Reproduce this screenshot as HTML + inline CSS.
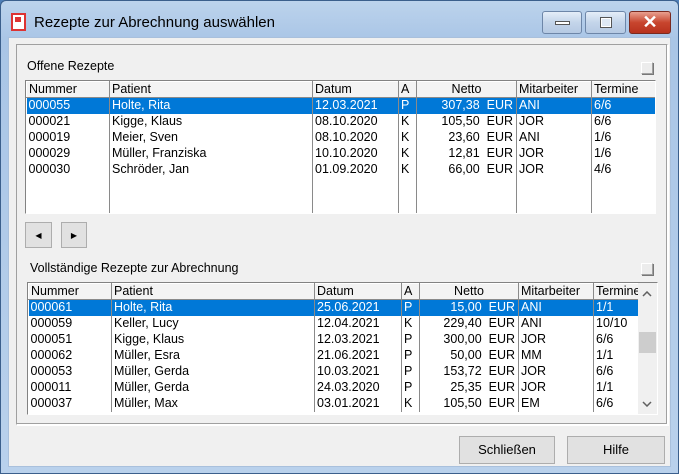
<!DOCTYPE html>
<html><head><meta charset="utf-8"><style>
*{margin:0;padding:0;box-sizing:border-box}
body{width:679px;height:474px;overflow:hidden;background:#4f7fb8;font-family:"Liberation Sans",sans-serif;font-size:12.5px;color:#000;position:relative}
.abs{position:absolute}
.frame{left:0;top:0;width:679px;height:474px;background:linear-gradient(#bcd3ec,#a9c5e6 40px,#b9d1ec);border:1px solid #3b5f8c;border-radius:6px 6px 0 0}
.client{left:8px;top:37px;width:663px;height:430px;background:#f0f0f0;border:1px solid #a9c0dc}
.title{left:34px;top:14px;font-size:15px;color:#000}
.tb{top:11px;height:23px;border:1px solid #6d86a8;border-radius:3px;background:linear-gradient(#e4edf8,#c4d5ea 50%,#b5c9e3)}
.panel{left:16px;top:44px;width:652px;height:381px;border:1px solid #a0a0a0;border-right-color:#fff;border-bottom-color:#fff;box-shadow:inset -1px -1px 0 #a0a0a0,1px 1px 0 #fff}
.list{background:#fff;border:1px solid #828282;border-right-color:#fff;border-bottom-color:#fff;overflow:hidden}
table{border-collapse:collapse;table-layout:fixed}
td,th{height:16px;padding:0 2px;white-space:nowrap;overflow:hidden;font-weight:normal;text-align:left;line-height:15px;border-right:1px solid #8a8a8a}
th{background:#f3f3f3;border:1px solid #fff;border-right:1px solid #8a8a8a;border-bottom:1px solid #8a8a8a}
tr.sel td{background:#0078d7;color:#fff}
.r{text-align:right;padding-right:3px}
.btn{background:#e1e1e1;border:1px solid #adadad;text-align:center;line-height:25px;font-size:13px}
.sq{width:12px;height:12px;border:1px solid #fff;border-right-color:#a0a0a0;border-bottom-color:#a0a0a0;background:#ececec;box-shadow:1px 1px 0 #777}
</style></head><body>
<div class="abs frame"></div>
<div class="abs" style="left:11px;top:13px;width:15px;height:18px;background:#fff;border:2px solid #d33;"><div style="position:absolute;left:2px;top:2px;width:6px;height:5px;background:#d33"></div></div>
<div class="abs title">Rezepte zur Abrechnung auswählen</div>
<div class="abs tb" style="left:542px;width:40px"><div style="position:absolute;left:12px;top:9px;width:15px;height:4px;background:#fff;border:1px solid #555"></div></div>
<div class="abs tb" style="left:585px;width:41px"><div style="position:absolute;left:14px;top:5px;width:12px;height:11px;border:1px solid #555;background:#dfe9f5;box-shadow:inset 0 0 0 1px #fff"></div></div>
<div class="abs tb" style="left:629px;width:42px;background:linear-gradient(#e8a090,#c8452e 50%,#b8321e);border-color:#7a2a20;color:#fff;font-weight:bold;font-size:18px;text-align:center;line-height:21px">✕</div>
<div class="abs client"></div>
<div class="abs panel"></div>
<div class="abs" style="left:27px;top:59px">Offene Rezepte</div>
<div class="abs sq" style="left:641px;top:62px"></div>
<div class="abs list" style="left:25px;top:80px;width:631px;height:134px">
<table style="width:630px"><colgroup><col style="width:83px"><col style="width:203px"><col style="width:86px"><col style="width:18px"><col style="width:100px"><col style="width:75px"><col style="width:65px"></colgroup>
<tr><th>Nummer</th><th>Patient</th><th>Datum</th><th>A</th><th style="text-align:center">Netto</th><th>Mitarbeiter</th><th>Termine</th></tr>
<tr class="sel"><td>000055</td><td>Holte, Rita</td><td>12.03.2021</td><td>P</td><td class="r">307,38&nbsp; EUR</td><td>ANI</td><td>6/6</td></tr>
<tr><td>000021</td><td>Kigge, Klaus</td><td>08.10.2020</td><td>K</td><td class="r">105,50&nbsp; EUR</td><td>JOR</td><td>6/6</td></tr>
<tr><td>000019</td><td>Meier, Sven</td><td>08.10.2020</td><td>K</td><td class="r">23,60&nbsp; EUR</td><td>ANI</td><td>1/6</td></tr>
<tr><td>000029</td><td>Müller, Franziska</td><td>10.10.2020</td><td>K</td><td class="r">12,81&nbsp; EUR</td><td>JOR</td><td>1/6</td></tr>
<tr><td>000030</td><td>Schröder, Jan</td><td>01.09.2020</td><td>K</td><td class="r">66,00&nbsp; EUR</td><td>JOR</td><td>4/6</td></tr>
<tr style="height:37px"><td></td><td></td><td></td><td></td><td></td><td></td><td></td></tr>
</table></div>
<div class="abs btn" style="left:25px;top:222px;width:27px;height:26px;font-size:8px">◀</div>
<div class="abs btn" style="left:61px;top:222px;width:26px;height:26px;font-size:8px">▶</div>
<div class="abs" style="left:30px;top:261px">Vollständige Rezepte zur Abrechnung</div>
<div class="abs sq" style="left:641px;top:263px"></div>
<div class="abs list" style="left:27px;top:282px;width:631px;height:133px">
<table style="width:611px"><colgroup><col style="width:83px"><col style="width:203px"><col style="width:87px"><col style="width:18px"><col style="width:99px"><col style="width:75px"><col style="width:46px"></colgroup>
<tr><th>Nummer</th><th>Patient</th><th>Datum</th><th>A</th><th style="text-align:center">Netto</th><th>Mitarbeiter</th><th>Termine</th></tr>
<tr class="sel"><td>000061</td><td>Holte, Rita</td><td>25.06.2021</td><td>P</td><td class="r">15,00&nbsp; EUR</td><td>ANI</td><td>1/1</td></tr>
<tr><td>000059</td><td>Keller, Lucy</td><td>12.04.2021</td><td>K</td><td class="r">229,40&nbsp; EUR</td><td>ANI</td><td>10/10</td></tr>
<tr><td>000051</td><td>Kigge, Klaus</td><td>12.03.2021</td><td>P</td><td class="r">300,00&nbsp; EUR</td><td>JOR</td><td>6/6</td></tr>
<tr><td>000062</td><td>Müller, Esra</td><td>21.06.2021</td><td>P</td><td class="r">50,00&nbsp; EUR</td><td>MM</td><td>1/1</td></tr>
<tr><td>000053</td><td>Müller, Gerda</td><td>10.03.2021</td><td>P</td><td class="r">153,72&nbsp; EUR</td><td>JOR</td><td>6/6</td></tr>
<tr><td>000011</td><td>Müller, Gerda</td><td>24.03.2020</td><td>P</td><td class="r">25,35&nbsp; EUR</td><td>JOR</td><td>1/1</td></tr>
<tr><td>000037</td><td>Müller, Max</td><td>03.01.2021</td><td>K</td><td class="r">105,50&nbsp; EUR</td><td>EM</td><td>6/6</td></tr>
</table>
<div class="abs" style="left:610px;top:0;width:19px;height:132px;background:#f0f0f0">
<svg class="abs" style="left:4px;top:8px" width="10" height="6"><path d="M1 5L5 1L9 5" fill="none" stroke="#606060" stroke-width="1.5"/></svg>
<div class="abs" style="left:1px;top:49px;width:17px;height:21px;background:#cdcdcd"></div>
<svg class="abs" style="left:4px;top:118px" width="10" height="6"><path d="M1 1L5 5L9 1" fill="none" stroke="#606060" stroke-width="1.5"/></svg>
</div></div>
<div class="abs btn" style="left:459px;top:436px;width:96px;height:28px">Schließen</div>
<div class="abs btn" style="left:567px;top:436px;width:98px;height:28px">Hilfe</div>
</body></html>
